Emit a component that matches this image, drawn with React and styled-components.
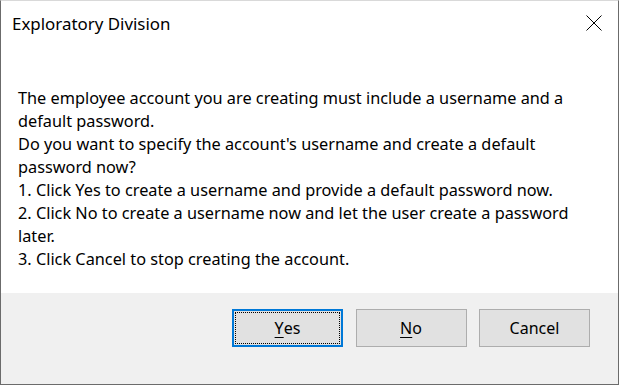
import React from 'react';
import styled, { createGlobalStyle } from 'styled-components';

const GlobalStyle = createGlobalStyle`
html, body {
    margin: 0;
    padding: 0;
    background: #ffffff;
}
`;

const Window = styled.div`
width: 619px;
height: 385px;
box-sizing: border-box;
display: flex;
flex-direction: column;
background: #ffffff;
border: 1px solid #6b6b6b;
border-top-color: #d9d9d9;
font-family: "Noto Sans", "Open Sans", sans-serif;
color: #000000;
`;

const TitleBar = styled.div`
height: 44px;
display: flex;
align-items: center;
justify-content: space-between;
padding: 0 0 0 11px;
`;

const Title = styled.span`
font-size: 16.9px;
`;

const CloseButton = styled.div`
width: 48px;
height: 44px;
display: flex;
align-items: center;
justify-content: center;
`;

const Body = styled.div`
flex: 1;
padding: 42px 20px 0 17px;
`;

const Line = styled.div`
font-size: 16.3px;
line-height: 23px;
white-space: nowrap;
`;

const Footer = styled.div`
height: 75px;
background: #f0f0f0;
display: flex;
justify-content: flex-end;
align-items: flex-start;
gap: 12.5px;
padding: 16px 28px 0 0;
`;

const Button = styled.button`
width: 111px;
height: 38px;
box-sizing: border-box;
background: #e1e1e1;
border: ${p => (p.$focused ? '2px solid #0078d7' : '1px solid #adadad')};
padding: ${p => (p.$focused ? '1px' : '2px')};
font-family: inherit;
font-size: 16px;
color: #000000;
display: flex;
outline: none;
`;

const FocusRing = styled.span`
flex: 1;
display: flex;
align-items: center;
justify-content: center;
border: 1px ${p => (p.$focused ? 'dotted #000000' : 'solid transparent')};
`;

const Mnemonic = styled.span`
text-decoration: underline;
text-underline-offset: 3px;
`;

const lines = [
    'The employee account you are creating must include a username and a',
    'default password.',
    "Do you want to specify the account's username and create a default",
    'password now?',
    '1. Click Yes to create a username and provide a default password now.',
    '2. Click No to create a username now and let the user create a password',
    'later.',
    '3. Click Cancel to stop creating the account.',
];

function App() {
    return (
        <>
            <GlobalStyle />
            <Window>
                <TitleBar>
                    <Title>Exploratory Division</Title>
                    <CloseButton>
                        <svg width="16" height="16" viewBox="0 0 16 16">
                            <path d="M0.5 0.5 L15.5 15.5 M15.5 0.5 L0.5 15.5" stroke="#000" strokeWidth="1" fill="none" />
                        </svg>
                    </CloseButton>
                </TitleBar>
                <Body>
                    {lines.map((l, i) => (
                        <Line key={i}>{l}</Line>
                    ))}
                </Body>
                <Footer>
                    <Button $focused>
                        <FocusRing $focused>
                            <Mnemonic>Y</Mnemonic>es
                        </FocusRing>
                    </Button>
                    <Button>
                        <FocusRing>
                            <Mnemonic>N</Mnemonic>o
                        </FocusRing>
                    </Button>
                    <Button>
                        <FocusRing>Cancel</FocusRing>
                    </Button>
                </Footer>
            </Window>
        </>
    );
}

export default App;
